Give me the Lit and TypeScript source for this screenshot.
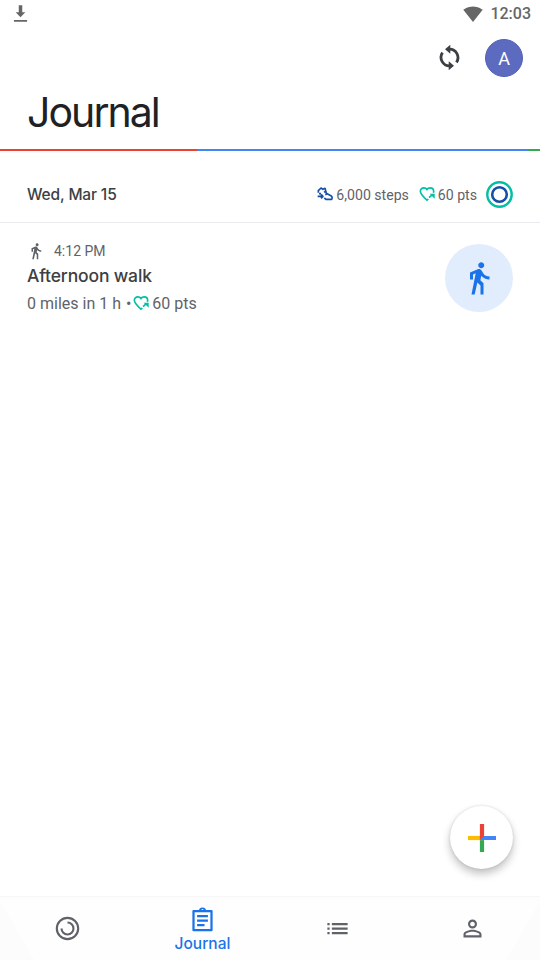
import { LitElement, html, svg, css } from "lit";
import { customElement, property } from "lit/decorators.js";

const WALK = "M13.5 5.500c1.100 0 2-.9 2-2s-.9-2-2-2-2 .9-2 2 .9 2 2 2zM9.800 8.900L7 23h2.100l1.800-8 2.100 2v6h2v-7.500l-2.100-2 .6-3C14.800 12 16.800 13 19 13v-2c-1.900 0-3.500-1-4.300-2.400l-1-1.600c-.4-.6-1-1-1.700-1-.3 0-.5.1-.8.1L6 8.300V13h2V9.600l1.800-.7";
const LIST = "M3 13h2v-2H3v2zm0 4h2v-2H3v2zm0-8h2V7H3v2zm4 4h14v-2H7v2zm0 4h14v-2H7v2zM7 7v2h14V7H7z";
const PERSON = "M12 5.900c1.160 0 2.100.94 2.100 2.100s-.94 2.100-2.100 2.100S9.900 9.160 9.900 8s.94-2.100 2.100-2.100m0 9c2.970 0 6.100 1.460 6.100 2.100v1.100H5.900V17c0-.64 3.130-2.100 6.100-2.100M12 4C9.790 4 8 5.790 8 8s1.790 4 4 4 4-1.790 4-4-1.790-4-4-4zm0 9c-2.670 0-8 1.340-8 4v3h16v-3c0-2.660-5.330-4-8-4z";

@customElement("fit-icon")
export class FitIcon extends LitElement {
  @property() name = "";
  static styles = css`
    :host { display: block; flex: none; }
    svg { display: block; width: 100%; height: 100%; overflow: visible; }
  `;
  private shape() {
    switch (this.name) {
      case "walk": return svg`<path fill="currentColor" d=${WALK} />`;
      case "list": return svg`<path fill="currentColor" d=${LIST} />`;
      case "person": return svg`<path fill="currentColor" d=${PERSON} />`;
      case "download": return svg`<path fill="currentColor" d="M10 1.500h4v8h3.500L12 15 6.500 9.500H10zM4.500 18.200h15v2.200h-15z" />`;
      case "wifi": return svg`<path fill="currentColor" d="M12.010 21.490L23.640 7c-.45-.34-4.930-4-11.640-4C5.280 3 .81 6.660.36 7l11.630 14.490.01.010.01-.010z" />`;
      case "sync": return svg`<g fill="none" stroke="currentColor" stroke-width="2.500"><path d="M11.500 4.600A7.500 7.500 0 0 1 18.200 16.300M12.500 19.400A7.500 7.500 0 0 1 5.800 7.700" /></g><path fill="currentColor" d="M12.700.7v8L8 4.700zM11.300 15.300v8l4.700-4z" />`;
      case "heart": return svg`<g fill="none" stroke="currentColor" stroke-width="2.500"><path d="M14 19.500 12 21.300C6 16 2 12.500 2 8 2 5 4.400 2.800 7.300 2.800 9.200 2.800 11 3.800 12 5.300 13 3.800 14.800 2.800 16.700 2.800 19.600 2.800 22 5 22 8c0 1-.1 1.500-.4 2.200" /><path d="M15 17.500 20 13" /></g><path fill="currentColor" d="M16 11.500h7.500V19z" />`;
      case "steps": return svg`<g fill="none" stroke="currentColor" stroke-width="2.500" stroke-linejoin="round"><path d="M2 10V7l4-4 3 2 3-1.500 2 7.500 7.500 4c1.500 1 1.500 4 .5 5H13.500l-2.500-2M10.500 9.500l3-1.500M12.500 13l3-1.500" /><path d="M1 15.500h8M3 11.500h3M6 12.500l3 3-3 3" /></g>`;
      case "goal": return svg`<g fill="none" stroke-width="2.400"><circle cx="13.500" cy="13.500" r="12.200" stroke="#00bfa5" /><circle cx="13.500" cy="13.500" r="7.300" stroke="#174ea6" stroke-width="2.600" /></g>`;
      case "rings": return svg`<g fill="none" stroke="currentColor" stroke-width="1.900"><circle cx="12" cy="12" r="9.500" /><path d="M12 6.700A5.300 5.300 0 1 1 6.700 12" /></g>`;
      case "clipboard": return svg`<path fill="none" stroke="currentColor" stroke-width="2" stroke-linejoin="round" d="M4 4.500h16v17H4z" /><path fill="currentColor" fill-rule="evenodd" d="M8.800 4.500a3.200 3.200 0 0 1 6.400 0zM12 2.700a.9.9 0 1 0 0 1.800.9.9 0 0 0 0-1.800zM7.200 8h9.600v1.900H7.200zM7.200 12h9.600v1.900H7.200zM7.200 16h6.600v1.900H7.200z" />`;
      case "plus": return svg`<path fill="#fbbc04" d="M0 11.900h14v4.200H0z" /><path fill="#4285f4" d="M14 11.900h14v4.200H11.900z" /><path fill="#34a853" d="M11.900 16.100h4.200V28h-4.200z" /><path fill="#ea4335" d="M11.900 0h4.200v11.900l-4.200 4.200z" />`;
      default: return svg``;
    }
  }
  render() {
    const size = this.name === "plus" ? 28 : this.name === "goal" ? 27 : 24;
    return html`<svg viewBox="0 0 ${size} ${size}" aria-hidden="true">${this.shape()}</svg>`;
  }
}

@customElement("app-root")
export class AppRoot extends LitElement {
  static styles = css`
    :host { display: flex; flex-direction: column; width: 540px; height: 960px; background: #fff; color: #5f6368; font-family: Roboto, "Liberation Sans", sans-serif; position: relative; overflow: hidden; }
    * { box-sizing: border-box; }
    .status { height: 28px; display: flex; align-items: center; padding: 0 9px 0 10px; color: #666; }
    .status .time { font-size: 16px; font-weight: 500; line-height: 28px; margin-left: 7px; }
    .dl { width: 21px; height: 21px; margin-right: auto; }
    .wifi { width: 20px; height: 20px; margin-top: -1px; }
    .actions { height: 60px; display: flex; justify-content: flex-end; align-items: center; gap: 22px; padding-right: 17px; }
    .sync { width: 27px; height: 27px; color: #3c4043; margin-top: -2px; }
    .avatar { width: 38px; height: 38px; border-radius: 50%; background: #5c6bc0; border: 1px solid #5362b4; color: #fff; font-size: 18px; line-height: 38px; text-align: center; }
    .title { height: 61px; padding-left: 27px; margin: 0; font: 400 41px/48px Inter, sans-serif; letter-spacing: -1.950px; color: #202124; }
    .accent { height: 2px; display: flex; flex: none; }
    .red { width: 197px; background: #ea4335; }
    .blue { width: 331px; background: #4285f4; }
    .green { flex: 1; background: #34a853; }
    .day { height: 72px; padding: 16px 27px 0; display: flex; align-items: center; border-bottom: 1px solid #e8eaed; font-size: 14.100px; }
    .date { font: 550 15.500px/24px Inter, sans-serif; letter-spacing: -.15px; color: #3c4043; margin-right: auto; }
    .ico { width: 16px; height: 16px; }
    .day .ico { margin-top: -1px; }
    .green-i { color: #00bfa5; }
    .navy { color: #174ea6; }
    .steps { margin: 0 10px 0 3px; line-height: 18px; }
    .pts { margin: 0 9px 0 3px; line-height: 18px; }
    .ring { width: 27px; height: 27px; }
    .session { display: flex; justify-content: space-between; padding: 18px 27px; }
    .when { display: flex; align-items: center; height: 20px; font-size: 14px; }
    .when .walk { width: 18px; height: 18px; margin-right: 9px; }
    .name { font: 550 17.500px/28px Inter, sans-serif; letter-spacing: -.15px; color: #3c4043; margin-top: 1px; }
    .detail { display: flex; align-items: center; font-size: 16px; line-height: 28px; }
    .dot { margin: 0 2px 0 5px; }
    .detail .ico { margin: -2px 3px 0 0; }
    .badge { width: 68px; height: 68px; margin-top: 3px; border-radius: 50%; background: #e1edfc; color: #1a73e8; display: grid; place-items: center; }
    .badge fit-icon { width: 36px; height: 36px; }
    .fab { position: absolute; right: 27px; bottom: 91px; width: 63px; height: 63px; border-radius: 50%; background: #fff; display: flex; padding: 17.500px 0 0 17.500px; box-shadow: 0 5px 9px rgba(0,0,0,.24), 0 0 3px rgba(0,0,0,.13); }
    .fab fit-icon { width: 28px; height: 28px; }
    .nav { margin-top: auto; height: 64px; background: linear-gradient(#fcfcfc, #fefefe 5px, transparent 6px), linear-gradient(60deg, #fcfcfc 29px, transparent 30px), linear-gradient(-60deg, #fcfcfc 29px, transparent 30px), #fefefe; border-top: 1px solid #f7f7f7; display: grid; grid-template-columns: repeat(4, 1fr); }
    .tab { display: flex; flex-direction: column; align-items: center; justify-content: center; }
    .tab fit-icon { width: 27px; height: 27px; }
    .active { color: #1a73e8; justify-content: flex-start; padding-top: 9px; }
    .label { font: 550 15.500px/20px Inter, sans-serif; letter-spacing: 0; margin-top: 1px; }
  `;
  render() {
    return html`
      <div class="status"><fit-icon class="dl" name="download"></fit-icon><fit-icon class="wifi" name="wifi"></fit-icon><span class="time">12:03</span></div>
      <div class="actions"><fit-icon class="sync" name="sync"></fit-icon><div class="avatar">A</div></div>
      <h1 class="title">Journal</h1>
      <div class="accent"><div class="red"></div><div class="blue"></div><div class="green"></div></div>
      <div class="day"><span class="date">Wed, Mar 15</span><fit-icon class="ico navy" name="steps"></fit-icon><span class="steps">6,000 steps</span><fit-icon class="ico green-i" name="heart"></fit-icon><span class="pts">60 pts</span><fit-icon class="ring" name="goal"></fit-icon></div>
      <div class="session">
        <div>
          <div class="when"><fit-icon class="walk" name="walk"></fit-icon>4:12 PM</div>
          <div class="name">Afternoon walk</div>
          <div class="detail">0 miles in 1 h<span class="dot">•</span><fit-icon class="ico green-i" name="heart"></fit-icon>60 pts</div>
        </div>
        <div class="badge"><fit-icon name="walk"></fit-icon></div>
      </div>
      <nav class="nav">
        <div class="tab"><fit-icon name="rings"></fit-icon></div>
        <div class="tab active"><fit-icon name="clipboard"></fit-icon><span class="label">Journal</span></div>
        <div class="tab"><fit-icon name="list"></fit-icon></div>
        <div class="tab"><fit-icon name="person"></fit-icon></div>
      </nav>
      <div class="fab"><fit-icon name="plus"></fit-icon></div>
    `;
  }
}
